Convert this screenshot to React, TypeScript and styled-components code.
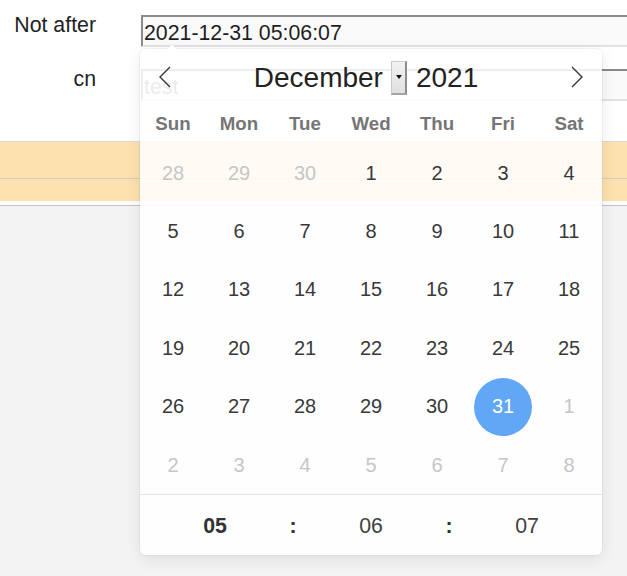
import React from 'react';
import styled, { createGlobalStyle } from 'styled-components';

const Global = createGlobalStyle`
  html, body { margin: 0; padding: 0; overflow: hidden; }
  body {
    background: #f3f3f3;
    font-family: "Liberation Sans", Arial, sans-serif;
  }
`;

const Page = styled.div`
  min-height: 576px;
`;

const Form = styled.div`
  background: #fff;
  padding: 13px 0 40px;
  display: flex;
  flex-direction: column;
  gap: 20px;
`;

const Row = styled.div`
  display: grid;
  grid-template-columns: 96px 520px;
  column-gap: 45px;
  align-items: start;
`;

const Label = styled.label`
  text-align: right;
  font-size: 21.3px;
  color: #222;
  white-space: nowrap;
`;

const InputWrap = styled.div`
  position: relative;
  margin-top: 2px;
`;

const TextInput = styled.input`
  box-sizing: border-box;
  width: 100%;
  height: 32px;
  margin: 0;
  padding: 5px 1px 0 1px;
  font: 21.3px/24px "Liberation Sans", Arial, sans-serif;
  color: #1e1e1e;
  background: #fafafa;
  border-top: 2px solid #8a8a8a;
  border-left: 2px solid #8a8a8a;
  border-bottom: 2px solid #e2e2e2;
  border-right: 2px solid #e2e2e2;
  outline: none;
  &::placeholder { color: #6f6f6f; }
`;

const Table = styled.div`
  background: #fff;
  border-top: 1px solid #dcdcdc;
  border-bottom: 1px solid #c2c2c2;
  padding-bottom: 4px;
`;

const TableRow = styled.div<{ $h: number; $line?: boolean }>`
  height: ${(p) => p.$h}px;
  background: #fde1ae;
  border-bottom: ${(p) => (p.$line ? '1px solid #cdcdcd' : 'none')};
`;

const Calendar = styled.div`
  position: absolute;
  top: calc(100% + 2px);
  left: -1px;
  width: 462px;
  z-index: 10;
  background: rgba(255, 255, 255, 0.86);
  border-radius: 6px;
  box-shadow: 0 0 0 1px rgba(0, 0, 0, 0.035), 0 4px 16px rgba(0, 0, 0, 0.09);
  color: #393939;

  &::before,
  &::after {
    content: '';
    position: absolute;
    left: 26px;
    border: solid transparent;
  }
  &::before {
    top: -12px;
    border-width: 6px;
    border-bottom-color: rgba(0, 0, 0, 0.06);
  }
  &::after {
    top: -10px;
    border-width: 5px;
    margin-left: 1px;
    border-bottom-color: #fff;
  }
`;

const Header = styled.div`
  height: 54px;
  display: grid;
  grid-template-columns: 50px 1fr 50px;
  align-items: center;
`;

const NavButton = styled.span`
  display: flex;
  justify-content: center;
  align-items: center;
  padding-top: 2px;
  color: #333;
  svg { display: block; }
`;

const MonthGroup = styled.div`
  display: flex;
  align-items: center;
  justify-content: center;
  padding: 4px 10px 0 0;
  font-size: 28px;
  color: #222;
`;

const SelectBox = styled.span`
  position: relative;
  box-sizing: border-box;
  width: 16px;
  height: 34px;
  margin: 0 9px 0 8px;
  background: linear-gradient(#f2f2f2, #e0e0e0);
  border: 1px solid #c9c9c9;
  border-right: 2px solid #8d8d8d;
  border-bottom: 2px solid #a5a5a5;
  &::after {
    content: '';
    position: absolute;
    left: 4px;
    top: 13px;
    border-style: solid;
    border-width: 4px 3px 0 3px;
    border-color: #111 transparent transparent transparent;
  }
`;

const WeekRow = styled.div`
  height: 41px;
  display: grid;
  grid-template-columns: repeat(7, 66px);
  align-items: center;
  justify-items: center;
  font-size: 18.7px;
  font-weight: bold;
  color: #757575;
`;

const DayGrid = styled.div`
  display: grid;
  grid-template-columns: repeat(7, 66px);
  grid-auto-rows: 58.4px;
  align-items: center;
  justify-items: center;
`;

const Day = styled.span<{ $muted?: boolean; $selected?: boolean }>`
  width: 58px;
  height: 58px;
  border-radius: 50%;
  display: flex;
  align-items: center;
  justify-content: center;
  font-size: 20px;
  color: ${(p) => (p.$selected ? '#fff' : p.$muted ? '#c6c6c6' : '#393939')};
  background: ${(p) => (p.$selected ? '#62a6f6' : 'transparent')};
`;

const TimeRow = styled.div`
  height: 57px;
  padding-top: 3px;
  border-top: 1px solid #e4e4e4;
  display: grid;
  grid-template-columns: 150px 6px 150px 6px 150px;
  align-items: center;
  justify-items: center;
  font-size: 21.3px;
  color: #404040;
`;

const TimePart = styled.span<{ $bold?: boolean }>`
  font-weight: ${(p) => (p.$bold ? 'bold' : 'normal')};
  color: ${(p) => (p.$bold ? '#333' : '#404040')};
`;

const Chevron = ({ dir }: { dir: 'left' | 'right' }) => (
  <svg width="12" height="22" viewBox="0 0 12 22">
    <polyline
      points={dir === 'left' ? '11,1 1,11 11,21' : '1,1 11,11 1,21'}
      fill="none"
      stroke="currentColor"
      strokeWidth="1.4"
    />
  </svg>
);

const weekdays = ['Sun', 'Mon', 'Tue', 'Wed', 'Thu', 'Fri', 'Sat'];

type Cell = { d: number; muted?: boolean; selected?: boolean };

const days: Cell[] = [
  { d: 28, muted: true }, { d: 29, muted: true }, { d: 30, muted: true },
  ...Array.from({ length: 31 }, (_, i) => ({ d: i + 1, selected: i + 1 === 31 })),
  ...Array.from({ length: 8 }, (_, i) => ({ d: i + 1, muted: true })),
];

export default function App() {
  return (
    <Page>
      <Global />
      <Form>
        <Row>
          <Label>Not after</Label>
          <InputWrap>
            <TextInput readOnly value="2021-12-31 05:06:07" />
            <Calendar>
              <Header>
                <NavButton><Chevron dir="left" /></NavButton>
                <MonthGroup>
                  <span>December</span>
                  <SelectBox />
                  <span>2021</span>
                </MonthGroup>
                <NavButton><Chevron dir="right" /></NavButton>
              </Header>
              <WeekRow>
                {weekdays.map((w) => (
                  <span key={w}>{w}</span>
                ))}
              </WeekRow>
              <DayGrid>
                {days.map((c, i) => (
                  <Day key={i} $muted={c.muted} $selected={c.selected}>
                    {c.d}
                  </Day>
                ))}
              </DayGrid>
              <TimeRow>
                <TimePart $bold>05</TimePart>
                <TimePart $bold>:</TimePart>
                <TimePart>06</TimePart>
                <TimePart $bold>:</TimePart>
                <TimePart>07</TimePart>
              </TimeRow>
            </Calendar>
          </InputWrap>
        </Row>
        <Row>
          <Label>cn</Label>
          <InputWrap>
            <TextInput readOnly placeholder="test" />
          </InputWrap>
        </Row>
      </Form>
      <Table>
        <TableRow $h={36} $line />
        <TableRow $h={22} />
      </Table>
    </Page>
  );
}
